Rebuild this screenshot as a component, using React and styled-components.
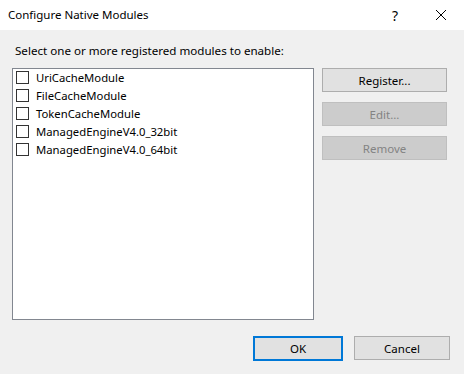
import React, { useState } from "react";
import styled, { createGlobalStyle } from "styled-components";

const Global = createGlobalStyle`
  html, body {
    margin: 0;
    padding: 0;
    background: #f0f0f0;
  }
  body {
    font-family: "Noto Sans", "Open Sans", sans-serif;
    font-size: 11.3px;
    color: #000;
  }
`;

const Window = styled.div`
  width: 464px;
  height: 374px;
  display: flex;
  flex-direction: column;
  background: #f0f0f0;
  overflow: hidden;
`;

const TitleBar = styled.div`
  height: 30px;
  background: #fff;
  display: flex;
  align-items: center;
  padding-left: 8px;
  box-sizing: border-box;
`;

const Title = styled.div`
  flex: 1;
  font-size: 11.5px;
  padding-bottom: 1px;
`;

const TitleButton = styled.div`
  width: 46px;
  height: 30px;
  display: flex;
  align-items: center;
  justify-content: center;
  font-size: 14px;
`;

const Body = styled.div`
  flex: 1;
  display: flex;
  flex-direction: column;
  padding: 12px 15px 0 12px;
`;

const Prompt = styled.div`
  padding-left: 3px;
  height: 26px;
  line-height: 17px;
  font-size: 11.6px;
`;

const Main = styled.div`
  display: flex;
  gap: 8px;
`;

const ListBox = styled.div`
  width: 302px;
  height: 252px;
  box-sizing: border-box;
  background: #fff;
  border: 1px solid #828790;
`;

const Row = styled.label`
  height: 18px;
  display: flex;
  align-items: center;
  padding-left: 3px;
  gap: 7px;
  line-height: 15px;
  padding-bottom: 1px;
  box-sizing: border-box;
`;

const Box = styled.span`
  width: 13px;
  height: 13px;
  box-sizing: border-box;
  border: 1px solid #333;
  background: #fff;
  display: flex;
  align-items: center;
  justify-content: center;
`;

const Side = styled.div`
  display: flex;
  flex-direction: column;
  gap: 10px;
`;

const Button = styled.button`
  font-family: inherit;
  font-size: 11.5px;
  width: ${(p) => p.$w || 125}px;
  height: ${(p) => p.$h || 24}px;
  box-sizing: border-box;
  padding: 0;
  background: ${(p) => (p.disabled ? "#cccccc" : "#e1e1e1")};
  border: ${(p) =>
    p.$focus ? "2px solid #0078d7" : p.disabled ? "1px solid #bfbfbf" : "1px solid #adadad"};
  color: ${(p) => (p.disabled ? "#838383" : "#000")};
  border-radius: 0;
  outline: none;
`;

const Footer = styled.div`
  display: flex;
  justify-content: flex-end;
  gap: 11px;
  padding-top: 16px;
  margin-right: -1px;
`;

const modules = [
  "UriCacheModule",
  "FileCacheModule",
  "TokenCacheModule",
  "ManagedEngineV4.0_32bit",
  "ManagedEngineV4.0_64bit",
];

function ModuleRow({ name }) {
  const [on, setOn] = useState(false);
  return (
    <Row onClick={() => setOn(!on)}>
      <Box>
        {on && (
          <svg width="9" height="9" viewBox="0 0 9 9">
            <path d="M1 4.5 L3.5 7 L8 1.5" stroke="#000" strokeWidth="1.4" fill="none" />
          </svg>
        )}
      </Box>
      <span>{name}</span>
    </Row>
  );
}

export default function App() {
  return (
    <Window>
      <Global />
      <TitleBar>
        <Title>Configure Native Modules</Title>
        <TitleButton>?</TitleButton>
        <TitleButton>
          <svg width="10" height="10" viewBox="0 0 10 10">
            <path d="M0 0 L10 10 M10 0 L0 10" stroke="#000" strokeWidth="1" />
          </svg>
        </TitleButton>
      </TitleBar>
      <Body>
        <Prompt>Select one or more registered modules to enable:</Prompt>
        <Main>
          <ListBox>
            {modules.map((m) => (
              <ModuleRow key={m} name={m} />
            ))}
          </ListBox>
          <Side>
            <Button>Register...</Button>
            <Button disabled>Edit...</Button>
            <Button disabled>Remove</Button>
          </Side>
        </Main>
        <Footer>
          <Button $w={90} $h={25} $focus>OK</Button>
          <Button $w={96}>Cancel</Button>
        </Footer>
      </Body>
    </Window>
  );
}
